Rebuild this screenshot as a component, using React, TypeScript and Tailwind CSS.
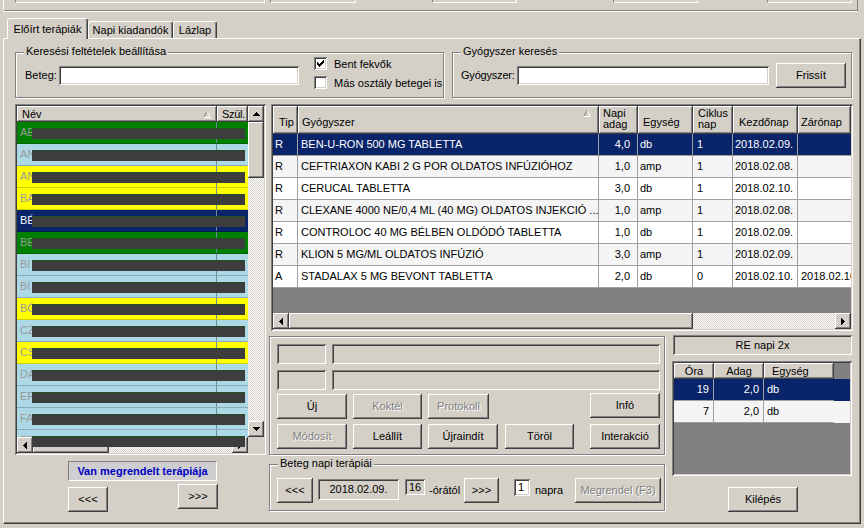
import React from "react";

const FONT = "font-['Liberation_Sans',Arial,sans-serif]";
const RAISED =
  "bg-[#d4d0c8] shadow-[inset_-1px_-1px_0_#404040,inset_1px_1px_0_#ffffff,inset_-2px_-2px_0_#808080]";
const SUNKEN =
  "shadow-[inset_1px_1px_0_#808080,inset_-1px_-1px_0_#ffffff,inset_2px_2px_0_#404040,inset_-2px_-2px_0_#d4d0c8]";
const ETCHED = "border border-[#808080] shadow-[inset_1px_1px_0_#ffffff,1px_1px_0_#ffffff]";
const DISABLED = "text-[#808080] [text-shadow:1px_1px_0_#ffffff]";
const CHECKER =
  "bg-[image:repeating-conic-gradient(#ffffff_0%_25%,#d4d0c8_0%_50%)] bg-size-[2px_2px]";

type Dir = "up" | "down" | "left" | "right";
const ARROWS: Record<Dir, { w: number; h: number; d: string }> = {
  up: { w: 7, h: 4, d: "M3 0h1v1H3z M2 1h3v1H2z M1 2h5v1H1z M0 3h7v1H0z" },
  down: { w: 7, h: 4, d: "M0 0h7v1H0z M1 1h5v1H1z M2 2h3v1H2z M3 3h1v1H3z" },
  left: { w: 4, h: 7, d: "M0 3h1v1H0z M1 2h1v3H1z M2 1h1v5H2z M3 0h1v7H3z" },
  right: { w: 4, h: 7, d: "M0 0h1v7H0z M1 1h1v5H1z M2 2h1v3H2z M3 3h1v1H3z" },
};

function ScrollBtn({ dir }: { dir: Dir }) {
  const a = ARROWS[dir];
  return (
    <div className={`${RAISED} w-[16px] h-[16px] shrink-0 flex items-center justify-center`}>
      <svg width={a.w} height={a.h} viewBox={`0 0 ${a.w} ${a.h}`} shapeRendering="crispEdges">
        <path d={a.d} fill="#000" />
      </svg>
    </div>
  );
}

function SortArrow({ className = "" }: { className?: string }) {
  return (
    <svg width="8" height="7" viewBox="0 0 8 7" className={`shrink-0 ${className}`}>
      <path d="M4 0.5 L0.5 6.5" stroke="#808080" fill="none" />
      <path d="M4 0.5 L7.5 6.5 L0.5 6.5" stroke="#ffffff" fill="none" />
    </svg>
  );
}

function Btn({
  children,
  className = "",
  disabled = false,
}: {
  children: React.ReactNode;
  className?: string;
  disabled?: boolean;
}) {
  return (
    <div
      className={`${RAISED} shrink-0 flex items-center justify-center whitespace-nowrap ${
        disabled ? DISABLED : ""
      } ${className}`}
    >
      {children}
    </div>
  );
}

function Field({ className = "", children }: { className?: string; children?: React.ReactNode }) {
  return <div className={`${SUNKEN} shrink-0 ${className}`}>{children}</div>;
}

function Check({ checked = false }: { checked?: boolean }) {
  return (
    <div className={`${SUNKEN} bg-white w-[13px] h-[13px] shrink-0 flex items-center justify-center`}>
      {checked && (
        <svg width="7" height="7" viewBox="0 0 7 7" shapeRendering="crispEdges">
          <path
            d="M6 0h1v1H6z M5 1h2v1H5z M0 2h1v1H0z M4 2h3v1H4z M0 3h2v1H0z M3 3h3v1H3z M0 4h5v1H0z M1 5h3v1H1z M2 6h1v1H2z"
            fill="#000"
          />
        </svg>
      )}
    </div>
  );
}

function Group({
  label,
  className = "",
  children,
}: {
  label: string;
  className?: string;
  children: React.ReactNode;
}) {
  return (
    <div className={`relative shrink-0 ${ETCHED} ${className}`}>
      <span className="absolute -top-[8px] left-[8px] bg-[#d4d0c8] px-[2px] whitespace-nowrap">
        {label}
      </span>
      {children}
    </div>
  );
}

const PATIENTS = [
  { t: "AE", bg: "bg-[#008000]" },
  { t: "AN", bg: "bg-[#add8e6]" },
  { t: "AN", bg: "bg-[#ffff00]" },
  { t: "BA", bg: "bg-[#ffff00]" },
  { t: "BÉ", bg: "bg-[#0a246a]", sel: true },
  { t: "BE", bg: "bg-[#008000]" },
  { t: "BI", bg: "bg-[#add8e6]" },
  { t: "BÍ", bg: "bg-[#add8e6]" },
  { t: "BÓ", bg: "bg-[#ffff00]" },
  { t: "CZ", bg: "bg-[#add8e6]" },
  { t: "CS", bg: "bg-[#ffff00]" },
  { t: "DA", bg: "bg-[#add8e6]" },
  { t: "ER", bg: "bg-[#add8e6]" },
  { t: "FA", bg: "bg-[#add8e6]" },
  { t: "FE", bg: "bg-[#add8e6]" },
];

const MEDS = [
  ["R", "BEN-U-RON 500 MG TABLETTA", "4,0", "db", "1", "2018.02.09.", ""],
  ["R", "CEFTRIAXON KABI 2 G POR OLDATOS INFÚZIÓHOZ", "1,0", "amp", "1", "2018.02.08.", ""],
  ["R", "CERUCAL TABLETTA", "3,0", "db", "1", "2018.02.10.", ""],
  ["R", "CLEXANE 4000 NE/0,4 ML (40 MG) OLDATOS INJEKCIÓ ...", "1,0", "amp", "1", "2018.02.08.", ""],
  ["R", "CONTROLOC 40 MG BÉLBEN OLDÓDÓ TABLETTA", "1,0", "db", "1", "2018.02.09.", ""],
  ["R", "KLION 5 MG/ML OLDATOS INFÚZIÓ", "3,0", "amp", "1", "2018.02.09.", ""],
  ["A", "STADALAX 5 MG BEVONT TABLETTA", "2,0", "db", "0", "2018.02.10.", "2018.02.10."],
];

const DOSES = [
  ["19", "2,0", "db"],
  ["7", "2,0", "db"],
];

const CELL = "border-r border-b border-[#a0a0a0] flex items-center shrink-0 overflow-hidden whitespace-nowrap";
const HCELL = `${RAISED} h-full shrink-0 flex items-end pb-[5px] overflow-hidden whitespace-nowrap`;

export default function App() {
  return (
    <div
      className={`${FONT} w-[864px] h-[528px] bg-[#d4d0c8] text-[11px] leading-[13px] text-black overflow-hidden flex flex-col`}
    >
      {/* top strip: bottoms of the header fields */}
      <div className="ml-[3px] w-[855px] h-[11px] shrink-0 flex items-start border-l border-l-white border-r border-r-[#808080] border-b border-b-[#808080] shadow-[0_1px_0_#ffffff]">
        {[
          "ml-[11px] w-[250px]",
          "ml-[5px] w-[86px]",
          "ml-[76px] w-[85px]",
          "ml-[96px] w-[85px]",
          "ml-[69px] w-[85px]",
        ].map((c, i) => (
          <div
            key={i}
            className={`${c} h-[3px] border-l border-r border-b border-l-[#808080] border-r-white border-b-white`}
          />
        ))}
      </div>

      {/* tabs */}
      <div className="h-[27px] ml-[3px] pl-[4px] flex items-end shrink-0">
        <div className="relative z-10 -mb-px h-[21px] w-[81px] bg-[#d4d0c8] border-t border-l border-white border-r border-r-[#404040] shadow-[inset_-1px_0_0_#808080] rounded-t-[3px] flex items-center justify-center">
          Előírt terápiák
        </div>
        <div className="h-[17px] w-[85px] border-t border-l border-white border-r border-r-[#404040] shadow-[inset_-1px_0_0_#808080] rounded-t-[3px] flex items-center justify-center">
          Napi kiadandók
        </div>
        <div className="h-[17px] w-[44px] border-t border-l border-white border-r border-r-[#404040] shadow-[inset_-1px_0_0_#808080] rounded-t-[3px] flex items-center justify-center">
          Lázlap
        </div>
      </div>

      {/* tab page */}
      <div className="ml-[3px] w-[858px] h-[486px] shrink-0 border-t border-l border-white border-r border-b border-r-[#404040] border-b-[#404040] shadow-[inset_-1px_-1px_0_#808080] pl-[11px] pt-[13px]">
        {/* search groups */}
        <div className="flex gap-[8px]">
          <Group label="Keresési feltételek beállítása" className="w-[429px] h-[46px] flex items-start pl-[9px]">
            <div className="mt-[13px] flex items-center">
              <span className="w-[34px]">Beteg:</span>
              <Field className="bg-white w-[240px] h-[19px]" />
            </div>
            <div className="ml-[15px] mt-[4px] flex flex-col gap-[6px]">
              <div className="flex items-center gap-[7px] h-[13px]">
                <Check checked />
                <span className="pt-[2px]">Bent fekvők</span>
              </div>
              <div className="flex items-center gap-[7px] h-[13px]">
                <Check />
                <span className="pt-[2px]">Más osztály betegei is</span>
              </div>
            </div>
          </Group>
          <Group label="Gyógyszer keresés" className="w-[400px] h-[46px] pl-[8px] pt-[10px]">
            <div className="flex items-center h-[25px]">
              <span className="w-[56px] tracking-[-0.2px] whitespace-nowrap">Gyógyszer:</span>
              <Field className="bg-white w-[252px] h-[19px]" />
              <Btn className="ml-[7px] w-[70px] h-[25px]">Frissít</Btn>
            </div>
          </Group>
        </div>

        {/* main area */}
        <div className="flex mt-[6px] gap-[5px]">
          {/* patient list column */}
          <div className="w-[251px] shrink-0 flex flex-col">
            <div className={`relative ${SUNKEN} h-[351px] p-[2px] flex flex-col`}>
              <div className="flex h-[331px]">
                <div className="w-[231px] flex flex-col">
                  <div className="h-[16px] flex shrink-0">
                    <div className={`${RAISED} w-[200px] h-full pl-[5px] pr-[6px] flex items-center`}>
                      <span>Név</span>
                      <SortArrow className="ml-auto" />
                    </div>
                    <div className={`${RAISED} w-[31px] h-full pl-[5px] flex items-center overflow-hidden whitespace-nowrap tracking-[-0.3px]`}>
                      Szül.
                    </div>
                  </div>
                  <div className="h-[315px] overflow-hidden bg-[#add8e6]">
                    {PATIENTS.map((p, i) => (
                      <div
                        key={i}
                        className={`relative h-[22px] flex border-b border-black/20 ${p.bg} ${
                          p.sel ? "text-white" : "text-[#9a9a9a]"
                        }`}
                      >
                        <div className="w-[200px] border-r border-[#6e8a99] pl-[3px] flex items-center overflow-hidden">
                          {p.t}
                        </div>
                        <div className="flex-1" />
                        <div className="absolute left-[15px] top-[6px] w-[213px] h-[11px] bg-[#3d3d3d] shadow-[inset_0_1px_0_#234d23]" />
                      </div>
                    ))}
                  </div>
                </div>
                <div className="w-[16px] flex flex-col">
                  <ScrollBtn dir="up" />
                  <div className={`${RAISED} h-[56px] shrink-0`} />
                  <div className={`flex-1 ${CHECKER}`} />
                  <ScrollBtn dir="down" />
                </div>
              </div>
              <div className="h-[16px] flex shrink-0">
                <ScrollBtn dir="left" />
                <div className={`${RAISED} w-[76px] shrink-0`} />
                <div className={`flex-1 ${CHECKER}`} />
                <ScrollBtn dir="right" />
                <div className="w-[16px] bg-[#d4d0c8]" />
              </div>
              {/* redaction bar spilling over the scrollbar */}
              <div className="absolute left-[17px] top-[332px] w-[213px] h-[11px] bg-[#3d3d3d] shadow-[inset_0_1px_0_#234d23]" />
            </div>

            <div className="mt-[6px] ml-[53px] w-[149px] h-[20px] border border-t-[#808080] border-l-[#808080] border-r-white border-b-white bg-[#cfcfd2] flex items-center justify-center font-bold text-[#0000c0] whitespace-nowrap">
              Van megrendelt terápiája
            </div>
            <div className="flex items-start ml-[53px]">
              <Btn className="w-[40px] h-[25px] mt-[6px]">&lt;&lt;&lt;</Btn>
              <Btn className="w-[40px] h-[25px] mt-[3px] ml-[70px]">&gt;&gt;&gt;</Btn>
            </div>
          </div>

          {/* right column */}
          <div className="w-[582px] shrink-0 flex flex-col">
            {/* therapies table */}
            <div className={`${SUNKEN} h-[227px] p-[2px] flex flex-col bg-[#808080]`}>
              <div className="h-[28px] flex shrink-0">
                <div className={`${HCELL} w-[25px] pl-[6px]`}>Tip</div>
                <div className={`${HCELL} w-[301px] pl-[4px]`}>
                  <span>Gyógyszer</span>
                  <SortArrow className="ml-auto mr-[8px] self-start mt-[4px]" />
                </div>
                <div className={`${HCELL} w-[39px] pl-[4px] !pb-[4px]`}>
                  <span className="leading-[11px]">
                    Napi
                    <br />
                    adag
                  </span>
                </div>
                <div className={`${HCELL} w-[55px] pl-[5px]`}>Egység</div>
                <div className={`${HCELL} w-[40px] pl-[5px] !pb-[4px]`}>
                  <span className="leading-[11px]">
                    Ciklus
                    <br />
                    nap
                  </span>
                </div>
                <div className={`${HCELL} w-[65px] pl-[6px]`}>Kezdőnap</div>
                <div className={`${HCELL} flex-1 min-w-0 pl-[3px]`}>Zárónap</div>
              </div>
              {MEDS.map((m, i) => (
                <div
                  key={i}
                  className={`flex h-[22px] shrink-0 ${
                    i === 0 ? "bg-[#0a246a] text-white" : i % 2 === 1 ? "bg-[#f4f4f4]" : "bg-white"
                  }`}
                >
                  <div className={`${CELL} w-[25px] pl-[2px]`}>{m[0]}</div>
                  <div className={`${CELL} w-[301px] pl-[3px]`}>{m[1]}</div>
                  <div className={`${CELL} w-[39px] pr-[7px] justify-end`}>{m[2]}</div>
                  <div className={`${CELL} w-[55px] pl-[2px]`}>{m[3]}</div>
                  <div className={`${CELL} w-[40px] pl-[4px]`}>{m[4]}</div>
                  <div className={`${CELL} w-[65px] pl-[2px]`}>{m[5]}</div>
                  <div className="flex-1 min-w-0 border-b border-[#a0a0a0] flex items-center pl-[3px] overflow-hidden whitespace-nowrap">
                    {m[6]}
                  </div>
                </div>
              ))}
              <div className="flex-1" />
              <div className="h-[16px] flex shrink-0">
                <ScrollBtn dir="left" />
                <div className={`${RAISED} w-[404px] shrink-0`} />
                <div className={`flex-1 ${CHECKER}`} />
                <ScrollBtn dir="right" />
              </div>
            </div>

            {/* lower section */}
            <div className="flex gap-[7px] -ml-[2px]">
              <div className="w-[396px] shrink-0 flex flex-col pt-[5px]">
                <div className={`${ETCHED} h-[119px] pl-[7px] pt-[7px] flex flex-col`}>
                  <div className="flex">
                    <Field className="bg-[#d4d0c8] w-[49px] h-[20px]" />
                    <Field className="bg-[#d4d0c8] ml-[6px] w-[328px] h-[20px]" />
                  </div>
                  <div className="flex mt-[6px]">
                    <Field className="bg-[#d4d0c8] w-[49px] h-[20px]" />
                    <Field className="bg-[#d4d0c8] ml-[6px] w-[328px] h-[20px]" />
                  </div>
                  <div className="flex mt-[4px]">
                    <Btn className="w-[70px] h-[25px]">Új</Btn>
                    <Btn disabled className="ml-[6px] w-[69px] h-[25px]">
                      Koktél
                    </Btn>
                    <Btn disabled className="ml-[6px] w-[61px] h-[25px]">
                      Protokoll
                    </Btn>
                    <Btn className="ml-[101px] w-[70px] h-[25px] -mt-px">Infó</Btn>
                  </div>
                  <div className="flex mt-[5px]">
                    <Btn disabled className="w-[70px] h-[25px]">
                      Módosít
                    </Btn>
                    <Btn className="ml-[6px] w-[69px] h-[25px]">Leállít</Btn>
                    <Btn className="ml-[6px] w-[70px] h-[25px]">Újraindít</Btn>
                    <Btn className="ml-[7px] w-[69px] h-[25px]">Töröl</Btn>
                    <Btn className="ml-[16px] w-[70px] h-[25px]">Interakció</Btn>
                  </div>
                </div>

                <Group label="Beteg napi terápiái" className="mt-[9px] h-[47px] pl-[7px] pt-[13px]">
                  <div className="flex items-start h-[25px]">
                    <Btn className="w-[36px] h-[25px]">&lt;&lt;&lt;</Btn>
                    <Field className="bg-[#d4d0c8] ml-[5px] mt-[1px] w-[81px] h-[21px] flex items-center justify-center">
                      2018.02.09.
                    </Field>
                    <Field className="bg-[#d4d0c8] ml-[6px] mt-[1px] w-[20px] h-[16px] flex items-center pl-[4px]">
                      16
                    </Field>
                    <span className="ml-[4px] w-[35px] self-center whitespace-nowrap">-órától</span>
                    <Btn className="w-[35px] h-[25px]">&gt;&gt;&gt;</Btn>
                    <Field className="bg-white ml-[15px] mt-[1px] w-[16px] h-[17px] flex items-center pl-[4px]">
                      1
                    </Field>
                    <span className="ml-[5px] w-[35px] self-center">napra</span>
                    <Btn disabled className="ml-[5px] w-[86px] h-[25px]">
                      Megrendel (F3)
                    </Btn>
                  </div>
                </Group>
              </div>

              <div className="w-[180px] shrink-0 flex flex-col pt-[4px]">
                <Field className="bg-[#d4d0c8] ml-[1px] w-[179px] h-[20px] flex items-center justify-center">
                  RE napi 2x
                </Field>
                <div className={`${SUNKEN} mt-[6px] h-[115px] p-[2px] bg-[#808080] flex flex-col`}>
                  <div className="h-[16px] flex shrink-0">
                    <div className={`${RAISED} w-[40px] flex items-center justify-center`}>Óra</div>
                    <div className={`${RAISED} w-[50px] flex items-center justify-center`}>Adag</div>
                    <div className={`${RAISED} w-[70px] flex items-center pl-[8px]`}>Egység</div>
                  </div>
                  {DOSES.map((d, i) => (
                    <div
                      key={i}
                      className={`flex h-[22px] shrink-0 ${
                        i === 0 ? "bg-[#0a246a] text-white" : "bg-[#f4f4f4]"
                      }`}
                    >
                      <div className={`${CELL} w-[40px] justify-end pr-[4px]`}>{d[0]}</div>
                      <div className={`${CELL} w-[50px] justify-end pr-[4px]`}>{d[1]}</div>
                      <div className={`${CELL} w-[70px] pl-[3px] border-r-0`}>{d[2]}</div>
                    </div>
                  ))}
                </div>
                <Btn className="mt-[11px] ml-[56px] w-[70px] h-[25px]">Kilépés</Btn>
              </div>
            </div>
          </div>
        </div>
      </div>
    </div>
  );
}
